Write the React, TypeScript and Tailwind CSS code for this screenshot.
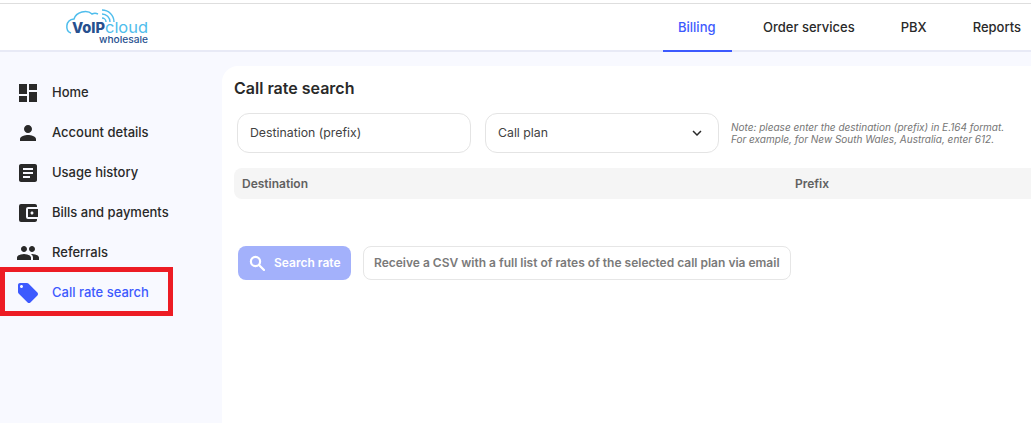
import {
  MdAccountBalanceWallet,
  MdArticle,
  MdDashboard,
  MdKeyboardArrowDown,
  MdLocalOffer,
  MdPeople,
  MdPerson,
} from "react-icons/md";

const sideItems = [
  { label: "Home", icon: MdDashboard },
  { label: "Account details", icon: MdPerson },
  { label: "Usage history", icon: MdArticle },
  { label: "Bills and payments", icon: MdAccountBalanceWallet },
  { label: "Referrals", icon: MdPeople },
  { label: "Call rate search", icon: MdLocalOffer, active: true },
];

const tabs = ["Billing", "Order services", "PBX", "Reports"];

function Logo() {
  return (
    <svg width="92" height="38" viewBox="0 0 92 38" className="shrink-0 overflow-visible">
      <path
        d="M6 24 C0 22 0 11 9 10 C11 3 22 0 27 5 C29 4 31 4 33 5"
        fill="none"
        stroke="#4fbdec"
        strokeWidth="1.5"
      />
      <path
        d="M37 1 A12 12 0 0 1 49 13 M37 5 A8 8 0 0 1 45 13 M37 9 A4 4 0 0 1 41 13"
        fill="none"
        stroke="#4fbdec"
        strokeWidth="1.4"
      />
      <text x="7" y="24" textLength="33" lengthAdjust="spacingAndGlyphs" fontFamily="Inter, sans-serif" fontWeight="800" fontSize="15" fill="#27508f">
        VoIP
      </text>
      <text x="40" y="24" textLength="43" lengthAdjust="spacingAndGlyphs" fontFamily="Inter, sans-serif" fontWeight="400" fontSize="15" fill="#4fbdec">
        cloud
      </text>
      <text x="34" y="34" textLength="49" lengthAdjust="spacingAndGlyphs" fontFamily="Inter, sans-serif" fontWeight="500" fontSize="9.5" fill="#27508f">
        wholesale
      </text>
    </svg>
  );
}

function SearchIcon() {
  return (
    <svg width="16" height="16" viewBox="0 0 16 16" className="shrink-0" fill="none" stroke="currentColor" strokeWidth="2.2">
      <circle cx="6.5" cy="6.5" r="4.6" />
      <path d="M10 10 L15 15" strokeLinecap="round" />
    </svg>
  );
}

export default function App() {
  return (
    <div className="relative flex h-[423px] w-[1031px] flex-col overflow-hidden bg-white font-['Inter',sans-serif] text-[13px] text-[#292929]">
      <div className="h-1 shrink-0 border-b border-[#dedede] bg-white" />
      <header className="flex h-12 shrink-0 border-b-2 border-[#e8eaf6] bg-white">
        <div className="ml-[65px] w-[598px] shrink-0 pt-[5px]">
          <Logo />
        </div>
        <nav className="flex shrink-0 gap-4">
          {tabs.map((tab, i) => (
            <div
              key={tab}
              className={
                i === 0
                  ? "-mb-0.5 flex h-12 w-[69px] items-center border-b-2 border-[#3d5afe] pl-[15px] pt-0.5 font-medium text-[#3d5afe]"
                  : "-mb-0.5 flex h-12 items-center px-[15px] font-medium"
              }
            >
              {tab}
            </div>
          ))}
        </nav>
      </header>

      <div className="flex min-h-0 flex-1 bg-[#f8f9ff]">
        <aside className="w-[222px] shrink-0 pt-[21px]">
          {sideItems.map((item) => {
            const Icon = item.icon;
            return (
              <div
                key={item.label}
                className={
                  item.active
                    ? "flex h-10 items-center gap-3 pl-4 font-medium text-[#3d5afe]"
                    : "flex h-10 items-center gap-3 pl-4 font-medium"
                }
              >
                <Icon size={24} />
                <span>{item.label}</span>
              </div>
            );
          })}
        </aside>

        <main className="mt-3.5 min-w-0 flex-1 rounded-tl-2xl bg-white pl-3 pt-3">
          <h1 className="text-base/5 font-semibold">Call rate search</h1>
          <div className="mt-[15px] flex items-center pl-[3px]">
            <div className="flex h-10 w-[234px] shrink-0 items-center rounded-xl border border-[#e4e4e4] px-3 text-[12.3px] text-[#424242]">
              Destination (prefix)
            </div>
            <div className="ml-3.5 flex h-10 w-[234px] shrink-0 items-center justify-between rounded-xl border border-[#e4e4e4] px-3">
              <span className="text-[12.3px] text-[#424242]">Call plan</span>
              <MdKeyboardArrowDown size={18} />
            </div>
            <p className="ml-3 whitespace-nowrap text-[10px]/3 italic text-[#757575]">
              Note: please enter the destination (prefix) in E.164 format.
              <br />
              For example, for New South Wales, Australia, enter 612.
            </p>
          </div>

          <div className="mt-[15px] flex h-[31px] items-center rounded-l-lg bg-[#f5f5f5] pl-2 text-xs font-semibold text-[#616161]">
            <span className="w-[553px]">Destination</span>
            <span>Prefix</span>
          </div>

          <div className="mt-[47px] flex items-center pl-1 text-xs font-semibold">
            <div className="flex h-[34px] w-[113px] items-center gap-[9px] rounded-lg bg-[#a3b1fb] pl-[11px] text-white">
              <SearchIcon />
              <span>Search rate</span>
            </div>
            <div className="ml-3 flex h-[34px] w-[428px] items-center rounded-lg border border-[#e6e6e6] pl-2.5 text-[#7a7a7a]">
              Receive a CSV with a full list of rates of the selected call plan via email
            </div>
          </div>
        </main>
      </div>

      {/* red annotation box from the screenshot */}
      <div className="absolute left-0 top-[267px] h-[49px] w-[173px] border-[5px] border-[#ed1c24]" />
    </div>
  );
}
